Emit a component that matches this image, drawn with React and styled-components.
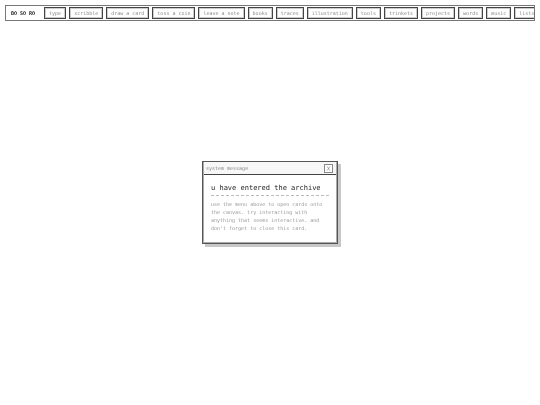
import React from 'react';
import styled, { createGlobalStyle } from 'styled-components';

const links = [
	'type',
	'scribble',
	'draw a card',
	'toss a coin',
	'leave a note',
	'books',
	'traces',
	'illustration',
	'tools',
	'trinkets',
	'projects',
	'words',
	'music',
	'lists',
];

const App = () => {
	const [open, setOpen] = React.useState(true);

	return (
		<Page>
			<GlobalStyle />
			<Nav>
				<Brand>BO SO RO</Brand>
				{links.map(link => (
					<NavButton key={link} type="button">
						{link}
					</NavButton>
				))}
			</Nav>
			{open && (
				<Card>
					<CardHeader>
						<span>system message</span>
						<Close
							type="button"
							aria-label="close"
							onClick={() => setOpen(false)}
						>
							<svg width="5" height="5" viewBox="0 0 5 5">
								<path d="M1 0.5L4 4.5M4 0.5L1 4.5" stroke="#777" strokeWidth="0.6" />
							</svg>
						</Close>
					</CardHeader>
					<CardBody>
						<Title>u have entered the archive</Title>
						<Text>
							use the menu above to open cards onto the canvas. try interacting
							with anything that seems interactive. and don't forget to close
							this card.
						</Text>
					</CardBody>
				</Card>
			)}
		</Page>
	);
};

const GlobalStyle = createGlobalStyle`
	* {
		box-sizing: border-box;
	}
	body {
		margin: 0;
		background: #fff;
		font-family: 'DejaVu Sans Mono', monospace;
		font-size: 5px;
		-webkit-font-smoothing: antialiased;
	}
	button {
		font: inherit;
	}
`;

const Page = styled.div`
	display: grid;
	grid-template-columns: minmax(0, 1fr);
	min-height: 100vh;
	padding: 0 5px;
	will-change: transform;
`;

/* nav and card share one grid cell, so the card centers on the whole page */
const Nav = styled.nav`
	grid-area: 1 / 1;
	align-self: start;
	display: flex;
	align-items: center;
	gap: 3px;
	margin-top: 5px;
	padding: 1px 0 1px 5px;
	border: 1px solid #777;
	overflow: hidden;
`;

const Brand = styled.strong`
	flex: none;
	margin-right: 6px;
	color: #222;
	white-space: nowrap;
`;

const NavButton = styled.button`
	flex: none;
	height: 12px;
	padding: 0 4px;
	border: 1px solid #444;
	background: #fff;
	color: #888;
	line-height: 8px;
	box-shadow: inset 0 0 0 1px #ccc;
	cursor: pointer;
`;

const Card = styled.section`
	grid-area: 1 / 1;
	place-self: center;
	width: 136px;
	border: 1px solid #555;
	background: #fff;
	box-shadow: inset 0 0 0 1px #aaa, 3px 3px 0 #c8c8c8;
`;

const CardHeader = styled.header`
	display: flex;
	align-items: center;
	justify-content: space-between;
	height: 13px;
	margin: 0 1px;
	padding: 0 3px 0 2px;
	border-bottom: 1px solid #444;
	background: #f7f7f7;
	color: #888;
`;

const Close = styled.button`
	display: flex;
	align-items: center;
	justify-content: center;
	width: 9px;
	height: 9px;
	padding: 0;
	border: 1px solid #888;
	background: #fff;
	cursor: pointer;
`;

const CardBody = styled.div`
	padding: 8px 8px 11px;
`;

const Title = styled.h1`
	margin: 0 0 4px;
	padding-bottom: 2px;
	border-bottom: 1px dashed #bbb;
	color: #222;
	font-size: 7px;
	font-weight: 400;
	line-height: 10px;
	white-space: nowrap;
`;

const Text = styled.p`
	margin: 0;
	color: #999;
	line-height: 8px;
`;

export default App;
